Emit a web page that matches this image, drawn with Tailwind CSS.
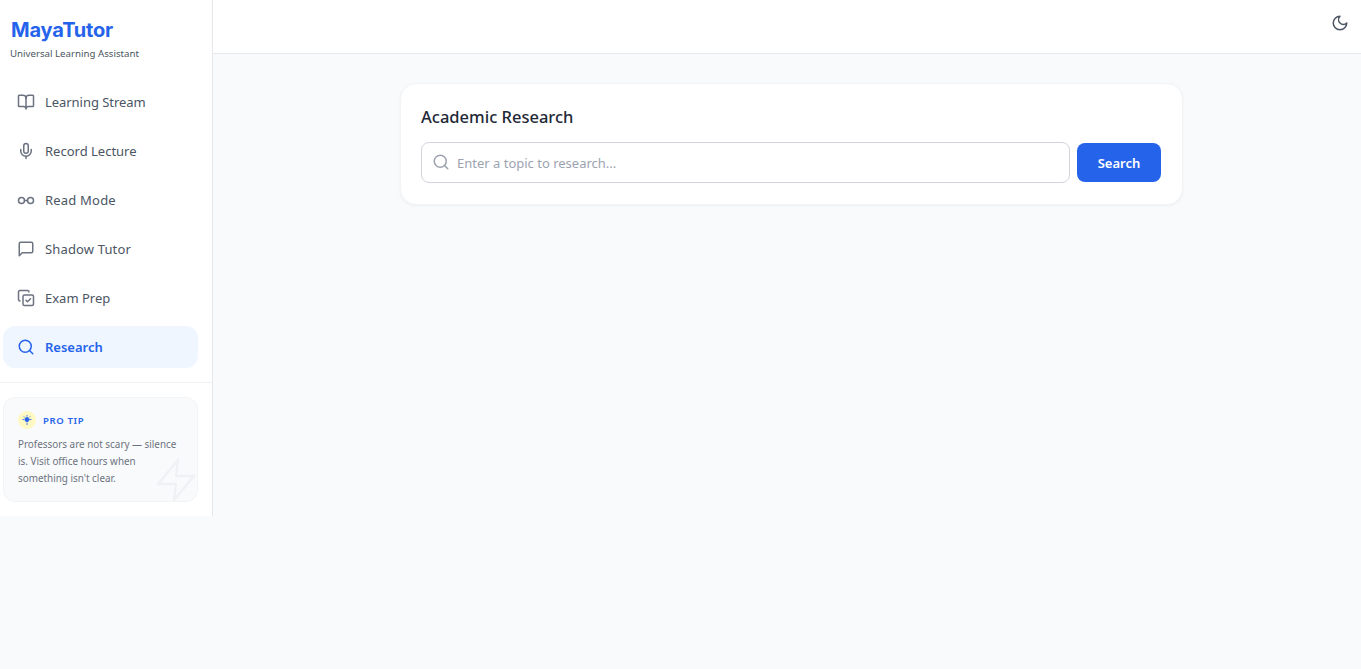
<!DOCTYPE html>
<html lang="en">
<head>
    <meta charset="UTF-8">
    <meta name="viewport" content="width=device-width, initial-scale=1.0">
    <title>MayaTutor</title>
    <script src="https://cdn.jsdelivr.net/npm/@tailwindcss/browser@4"></script>
</head>
<body class="bg-[#f9fafb] font-['Noto_Sans',sans-serif] h-[669px] overflow-hidden">
    <div class="flex items-start">
        <!-- Sidebar -->
        <aside class="w-[213px] h-[516px] shrink-0 bg-white border-r border-[#e5e7eb] flex flex-col">
            <div class="pl-[11px] pt-[17px] h-[72px]">
                <div class="font-['Inter',sans-serif] font-bold text-[20px] leading-[26px] tracking-[-0.2px] text-[#2563eb]">MayaTutor</div>
                <div class="-ml-px text-[9.7px] leading-[14px] mt-[4px] text-[#4b5563]">Universal Learning Assistant</div>
            </div>
            <nav class="pl-[3px] pr-[14px] pt-[9px] flex flex-col gap-[7px]">
                <a class="h-[42px] rounded-xl flex items-center pl-[14px] gap-[10px] text-[13px] text-[#4b5563]">
                    <svg class="w-[18px] h-[18px] -mt-[1px] text-[#6b7280]" viewBox="0 0 24 24" fill="none" stroke="currentColor" stroke-width="2" stroke-linecap="round" stroke-linejoin="round"><path d="M12 7v14"/><path d="M3 18a1 1 0 0 1-1-1V4a1 1 0 0 1 1-1h5a4 4 0 0 1 4 4 4 4 0 0 1 4-4h5a1 1 0 0 1 1 1v13a1 1 0 0 1-1 1h-6a3 3 0 0 0-3 3 3 3 0 0 0-3-3z"/></svg>
                    <span class="mt-[2px] tracking-[-0.05px]">Learning Stream</span>
                </a>
                <a class="h-[42px] rounded-xl flex items-center pl-[14px] gap-[10px] text-[13px] text-[#4b5563]">
                    <svg class="w-[18px] h-[18px] -mt-[1px] text-[#6b7280]" viewBox="0 0 24 24" fill="none" stroke="currentColor" stroke-width="2" stroke-linecap="round" stroke-linejoin="round"><path d="M12 2a3 3 0 0 0-3 3v7a3 3 0 0 0 6 0V5a3 3 0 0 0-3-3Z"/><path d="M19 10v2a7 7 0 0 1-14 0v-2"/><path d="M12 19v3"/></svg>
                    <span class="mt-[2px]">Record Lecture</span>
                </a>
                <a class="h-[42px] rounded-xl flex items-center pl-[14px] gap-[10px] text-[13px] text-[#4b5563]">
                    <svg class="w-[18px] h-[18px] -mt-[1px] text-[#6b7280]" viewBox="0 0 24 24" fill="none" stroke="currentColor" stroke-width="2" stroke-linecap="round" stroke-linejoin="round"><circle cx="6" cy="12.5" r="4"/><circle cx="18" cy="12.5" r="4"/><path d="M10 12.5h4"/></svg>
                    <span class="mt-[2px] tracking-[0.2px]">Read Mode</span>
                </a>
                <a class="h-[42px] rounded-xl flex items-center pl-[14px] gap-[10px] text-[13px] text-[#4b5563]">
                    <svg class="w-[18px] h-[18px] -mt-[1px] text-[#6b7280]" viewBox="0 0 24 24" fill="none" stroke="currentColor" stroke-width="2" stroke-linecap="round" stroke-linejoin="round"><path d="M21 15a2 2 0 0 1-2 2H7l-4 4V5a2 2 0 0 1 2-2h14a2 2 0 0 1 2 2z"/></svg>
                    <span class="mt-[2px] tracking-[0.15px]">Shadow Tutor</span>
                </a>
                <a class="h-[42px] rounded-xl flex items-center pl-[14px] gap-[10px] text-[13px] text-[#4b5563]">
                    <svg class="w-[18px] h-[18px] -mt-[1px] text-[#6b7280]" viewBox="0 0 24 24" fill="none" stroke="currentColor" stroke-width="2" stroke-linecap="round" stroke-linejoin="round"><path d="M4 16a2 2 0 0 1-2-2V4a2 2 0 0 1 2-2h10a2 2 0 0 1 2 2"/><rect x="8" y="8" width="14" height="14" rx="2"/><path d="m12 15 2 2 4-4"/></svg>
                    <span class="mt-[2px]">Exam Prep</span>
                </a>
                <a class="h-[42px] rounded-xl flex items-center pl-[14px] gap-[10px] text-[13px] font-semibold text-[#2563eb] bg-[#eff6ff]">
                    <svg class="w-[18px] h-[18px] -mt-[1px]" viewBox="0 0 24 24" fill="none" stroke="currentColor" stroke-width="2" stroke-linecap="round" stroke-linejoin="round"><circle cx="11" cy="11" r="8"/><path d="m21 21-4.3-4.3"/></svg>
                    <span class="mt-[2px]">Research</span>
                </a>
            </nav>
            <div class="mt-[14px] border-t border-[#f0f1f4] pt-[14px] pl-[3px] pr-[14px]">
                <!-- Pro tip -->
                <div class="relative overflow-hidden h-[105px] rounded-xl bg-[#f9fafb] border border-[#f3f4f6] pl-[14px] pr-[16px] pt-[13px]">
                    <div class="flex items-center gap-[7px]">
                        <span class="w-[18px] h-[18px] rounded-full bg-[#fef9c3] flex items-center justify-center">
                            <svg class="w-[10px] h-[10px] text-[#2563eb]" viewBox="0 0 24 24" fill="currentColor" stroke="currentColor" stroke-width="2" stroke-linecap="round"><circle cx="12" cy="11" r="5"/><path d="M12 1v2M12 19v4M2 11h2M20 11h2M5 4l1.5 1.5M19 4l-1.5 1.5"/></svg>
                        </span>
                        <span class="mt-[2px] text-[9.5px] font-semibold tracking-[0.65px] text-[#2563eb]">PRO TIP</span>
                    </div>
                    <p class="mt-[7px] text-[9.9px] leading-[17px] text-[#6b7280]">Professors are not scary — silence is. Visit office hours when something isn't clear.</p>
                    <svg class="absolute right-[-3px] bottom-[-3px] w-[48px] h-[48px] text-[#f0f1f4]" viewBox="0 0 24 24" fill="none" stroke="currentColor" stroke-width="1.2" stroke-linecap="round" stroke-linejoin="round"><path d="M13 2 3 14h9l-1 8 10-12h-9l1-8z"/></svg>
                </div>
            </div>
        </aside>

        <div class="flex-1">
            <!-- Top bar -->
            <header class="h-[54px] bg-white border-b border-[#e5e7eb] flex items-start justify-end pt-[14px] pr-[12px]">
                <svg class="w-[18px] h-[18px] text-[#4b5563]" viewBox="0 0 24 24" fill="none" stroke="currentColor" stroke-width="2" stroke-linecap="round" stroke-linejoin="round"><path d="M12 3a6 6 0 0 0 9 9 9 9 0 1 1-9-9Z"/></svg>
            </header>
            <main class="pt-[29px] pl-[187px]">
                <section class="w-[783px] h-[122px] bg-white rounded-2xl border border-[#f3f4f6] shadow-[0_1px_3px_rgba(0,0,0,0.05)] pl-[20px] pr-[21px] pt-[20px]">
                    <h2 class="text-[16.5px] leading-[26px] font-medium text-[#1f2937]">Academic Research</h2>
                    <div class="mt-[12px] flex items-center gap-[7px]">
                        <div class="flex-1 h-[41px] rounded-lg border border-[#d1d5db] flex items-center pl-[10px] gap-[7px]">
                            <svg class="w-[18px] h-[18px] -mt-[1px] text-[#9ca3af]" viewBox="0 0 24 24" fill="none" stroke="currentColor" stroke-width="2" stroke-linecap="round" stroke-linejoin="round"><circle cx="11" cy="11" r="8"/><path d="m21 21-4.3-4.3"/></svg>
                            <span class="mt-[2px] text-[13px] text-[#9ca3af]">Enter a topic to research...</span>
                        </div>
                        <button class="w-[84px] h-[39px] pt-[2px] rounded-lg bg-[#2563eb] text-white text-[13px] font-semibold">Search</button>
                    </div>
                </section>
            </main>
        </div>
    </div>
</body>
</html>
